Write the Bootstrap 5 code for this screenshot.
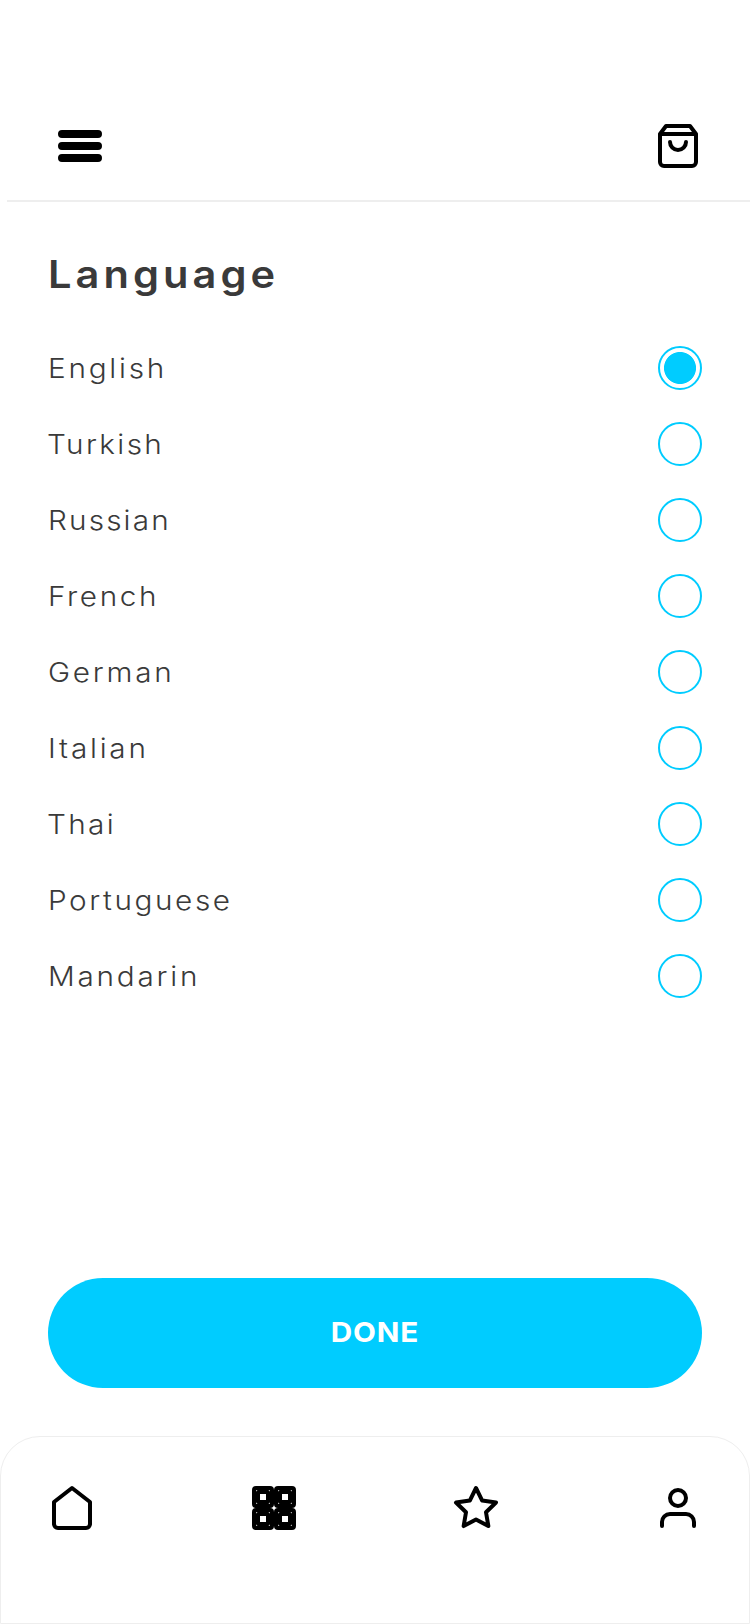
<!DOCTYPE html>
<html lang="en">
<head>
<meta charset="utf-8">
<meta name="viewport" content="width=device-width, initial-scale=1">
<title>Language</title>
<link href="https://cdn.jsdelivr.net/npm/bootstrap@5.3.0/dist/css/bootstrap.min.css" rel="stylesheet">
<style>
  :root { --accent: #00ccff; --ink: #3a3a3a; --line: #eeeeee; }
  body { font-family: Inter, "Open Sans", "Liberation Sans", sans-serif; color: var(--ink); }
  .screen { height: 1624px; }
  .topbar { height: 202px; padding: 0 48px 32px 56px; }
  .topbar-line { height: 2px; margin: -2px 0 0 7px; background: var(--line); }
  .icon { width: 48px; height: 48px; display: block; fill: none; stroke: #000; stroke-width: 2; stroke-linecap: round; stroke-linejoin: round; }
  /* wide-set lettering */
  .screen-title, .lang-row label { transform: scaleX(1.08); transform-origin: left center; }
  .screen-title { font-size: 38.5px; line-height: 48px; font-weight: 600; letter-spacing: 3.75px; margin: 48px 0 0 48px; align-self: flex-start; }
  .lang-list { margin: 48px 48px 0; row-gap: 32px; }
  .lang-row { height: 44px; min-height: 0; padding: 0; margin: 0; }
  .lang-row label { font-size: 27.5px; line-height: 44px; font-weight: 300; letter-spacing: 2.55px; }
  .lang-row:nth-child(2) label, .lang-row:nth-child(7) label { letter-spacing: 2.2px; margin-left: -1px; }
  .lang-row:nth-child(3) label { letter-spacing: 2px; }
  .lang-row:nth-child(4) label, .lang-row:nth-child(8) label { letter-spacing: 2.4px; }
  .lang-row .form-check-input { width: 44px; height: 44px; margin: 0; float: none; border: 2px solid var(--accent); background: none; }
  .lang-row .form-check-input:checked { background: radial-gradient(circle, var(--accent) 15.6px, transparent 16.4px) center / 44px 44px no-repeat; }
  .btn-done { height: 110px; margin: 0 48px 48px; background: var(--accent); color: #fff; font-size: 27.5px; font-weight: 700; border: 0; padding: 0; }
  .btn-done span { display: inline-block; letter-spacing: .8px; margin-right: -.8px; transform: scaleX(1.08); }
  .tabbar { height: 188px; padding: 47px 47px 0; border: 1px solid var(--line); border-radius: 40px 40px 0 0; }
</style>
</head>
<body class="bg-white">
<div class="screen d-flex flex-column">
  <header class="topbar d-flex justify-content-between align-items-end">
    <svg class="icon" viewBox="0 0 24 24"><path d="M3 6h18M3 12h18M3 18h18" stroke-width="4"/></svg>
    <svg class="icon" viewBox="0 0 24 24"><path d="M6 2 3 6v14a2 2 0 0 0 2 2h14a2 2 0 0 0 2-2V6l-3-4zM3 6h18M16 10a4 4 0 0 1-8 0"/></svg>
  </header>
  <div class="topbar-line"></div>
  <main class="d-flex flex-column flex-grow-1">
    <h1 class="screen-title">Language</h1>
    <form class="lang-list d-flex flex-column">
      <div class="lang-row form-check d-flex justify-content-between align-items-center"><label for="l1">English</label><input class="form-check-input" type="radio" name="lang" id="l1" checked></div>
      <div class="lang-row form-check d-flex justify-content-between align-items-center"><label for="l2">Turkish</label><input class="form-check-input" type="radio" name="lang" id="l2"></div>
      <div class="lang-row form-check d-flex justify-content-between align-items-center"><label for="l3">Russian</label><input class="form-check-input" type="radio" name="lang" id="l3"></div>
      <div class="lang-row form-check d-flex justify-content-between align-items-center"><label for="l4">French</label><input class="form-check-input" type="radio" name="lang" id="l4"></div>
      <div class="lang-row form-check d-flex justify-content-between align-items-center"><label for="l5">German</label><input class="form-check-input" type="radio" name="lang" id="l5"></div>
      <div class="lang-row form-check d-flex justify-content-between align-items-center"><label for="l6">Italian</label><input class="form-check-input" type="radio" name="lang" id="l6"></div>
      <div class="lang-row form-check d-flex justify-content-between align-items-center"><label for="l7">Thai</label><input class="form-check-input" type="radio" name="lang" id="l7"></div>
      <div class="lang-row form-check d-flex justify-content-between align-items-center"><label for="l8">Portuguese</label><input class="form-check-input" type="radio" name="lang" id="l8"></div>
      <div class="lang-row form-check d-flex justify-content-between align-items-center"><label for="l9">Mandarin</label><input class="form-check-input" type="radio" name="lang" id="l9"></div>
    </form>
    <button type="button" class="btn btn-done rounded-pill mt-auto"><span>DONE</span></button>
  </main>
  <nav class="tabbar d-flex justify-content-between align-items-start">
    <svg class="icon" viewBox="0 0 24 24"><path d="m3 9 9-7 9 7v11a2 2 0 0 1-2 2H5a2 2 0 0 1-2-2z"/></svg>
    <svg class="icon" viewBox="0 0 24 24">
      <rect x="2" y="2" width="9" height="9" rx="1"/><rect x="4" y="4" width="5" height="5"/>
      <rect x="13" y="2" width="9" height="9" rx="1"/><rect x="15" y="4" width="5" height="5"/>
      <rect x="2" y="13" width="9" height="9" rx="1"/><rect x="4" y="15" width="5" height="5"/>
      <rect x="13" y="13" width="9" height="9" rx="1"/><rect x="15" y="15" width="5" height="5"/>
    </svg>
    <svg class="icon" viewBox="0 0 24 24"><path d="m12 2 3.09 6.26L22 9.27l-5 4.87 1.18 6.88L12 17.77l-6.18 3.25L7 14.14 2 9.27l6.91-1.01z"/></svg>
    <svg class="icon" viewBox="0 0 24 24"><path d="M20 21v-2a4 4 0 0 0-4-4H8a4 4 0 0 0-4 4v2"/><circle cx="12" cy="7" r="4"/></svg>
  </nav>
</div>
<script src="https://cdn.jsdelivr.net/npm/bootstrap@5.3.0/dist/js/bootstrap.bundle.min.js"></script>
</body>
</html>
